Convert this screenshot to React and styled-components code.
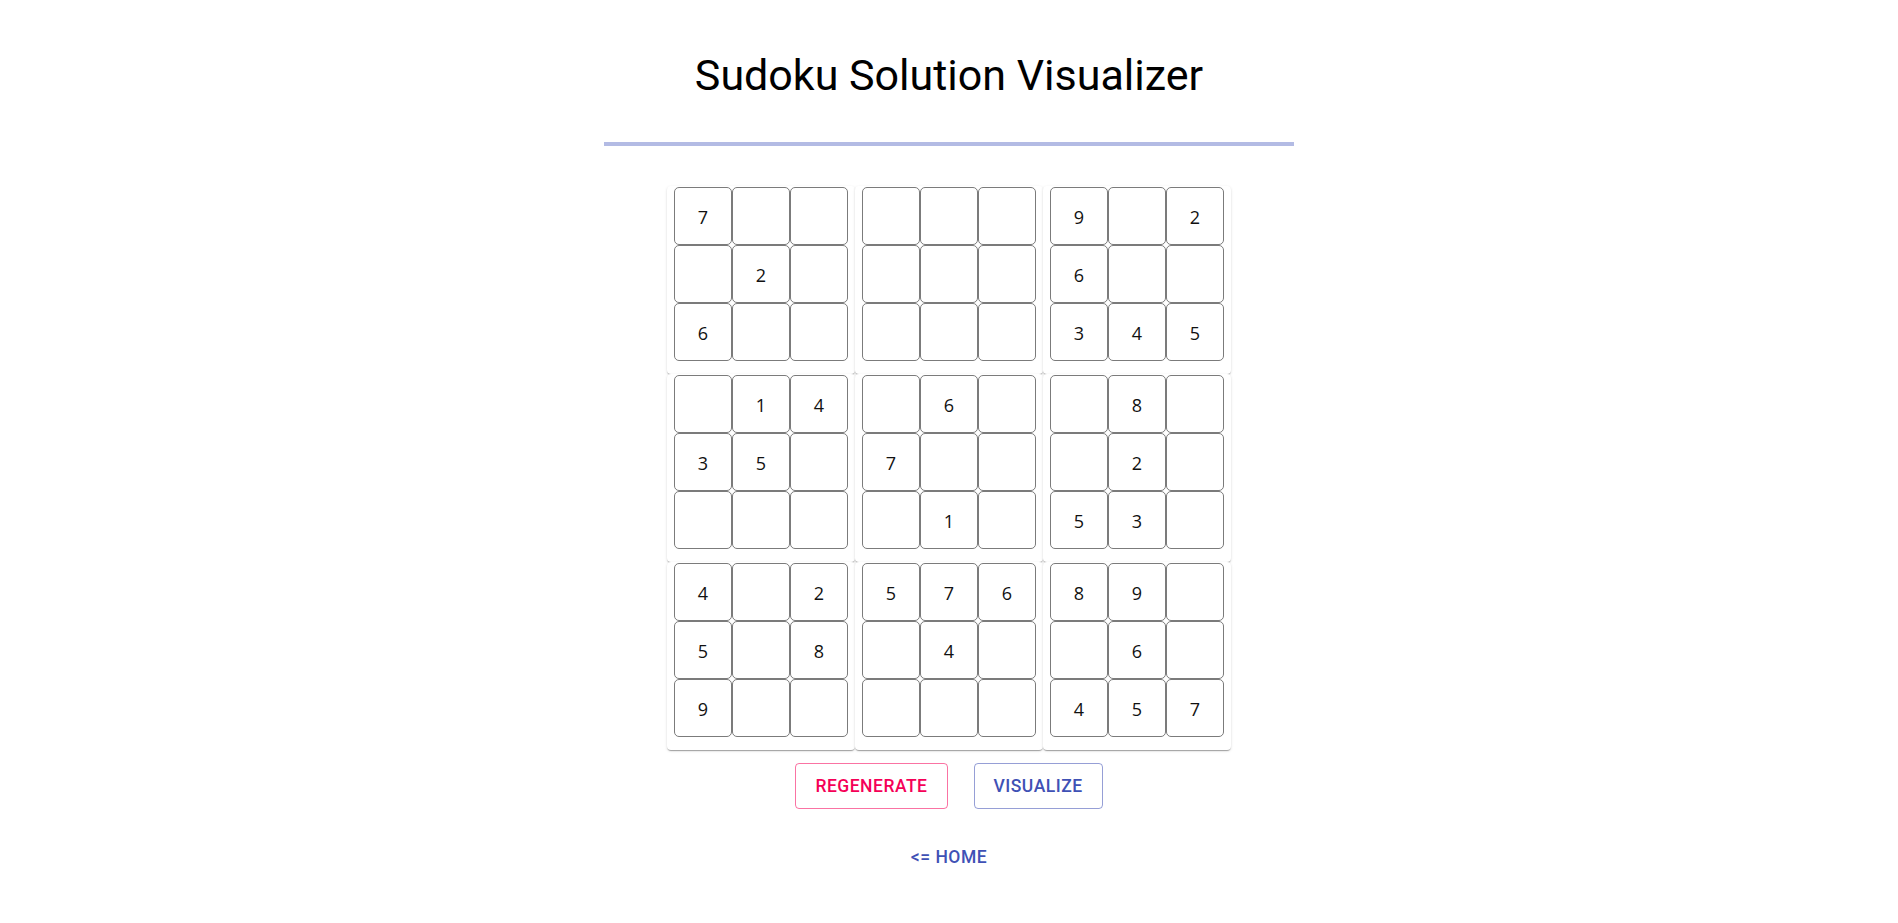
import React from 'react';
import styled, { createGlobalStyle } from 'styled-components';

const Global = createGlobalStyle`
  body {
    margin: 0;
    background: #fff;
    font-family: Roboto, "Liberation Sans", Arial, sans-serif;
  }
`;

const Page = styled.div`
  display: flex;
  flex-direction: column;
  align-items: center;
`;

const Title = styled.h1`
  margin: 50px 0 0;
  font-size: 43px;
  line-height: 50px;
  font-weight: 400;
  color: #000;
`;

const Divider = styled.hr`
  width: 690px;
  height: 4px;
  margin: 42px 0 0;
  border: 0;
  background: #b3bbe4;
`;

const Board = styled.div`
  margin-top: 40px;
  display: grid;
  grid-template-columns: repeat(3, 188px);
  grid-auto-rows: 188px;
`;

const Box = styled.div`
  box-sizing: border-box;
  padding: 1px 7px 13px;
  border-radius: 4px;
  background: #fff;
  box-shadow: 0px 2px 1px -1px rgba(0, 0, 0, 0.2), 0px 1px 1px 0px rgba(0, 0, 0, 0.14),
    0px 1px 3px 0px rgba(0, 0, 0, 0.12);
  display: grid;
  grid-template-columns: repeat(3, 58px);
  grid-auto-rows: 58px;
  justify-content: center;
`;

const Cell = styled.div`
  box-sizing: border-box;
  border: 1px solid #7b7b7b;
  border-radius: 5px;
  display: flex;
  align-items: center;
  justify-content: center;
  padding-top: 2px;
  font-family: "Open Sans", "Noto Sans", sans-serif;
  font-size: 18px;
  color: #111;
`;

const Actions = styled.div`
  margin-top: 13px;
  display: flex;
  gap: 26px;
`;

const Outlined = styled.button`
  height: 46px;
  padding: 0 19px;
  background: transparent;
  border-radius: 4px;
  border: 1px solid ${({ tone }) => (tone === 'pink' ? 'rgba(245, 0, 87, 0.55)' : 'rgba(63, 81, 181, 0.55)')};
  color: ${({ tone }) => (tone === 'pink' ? '#f50057' : '#3f51b5')};
  font-family: Roboto, sans-serif;
  font-weight: 500;
  font-size: 17.5px;
  letter-spacing: 0.02857em;
  text-transform: uppercase;
  cursor: pointer;
`;

const HomeLink = styled.button`
  margin-top: 27px;
  padding: 6px 8px;
  background: none;
  border: 0;
  color: #3f51b5;
  font-family: Roboto, sans-serif;
  font-weight: 500;
  font-size: 17.5px;
  line-height: 30px;
  letter-spacing: 0.02857em;
  cursor: pointer;
`;

// each string is one 3x3 box, read row by row; "." is empty
const boxes = [
  '7...2.6..',
  '.........',
  '9.26..345',
  '.1435....',
  '.6.7...1.',
  '.8..2.53.',
  '4.25.89..',
  '576.4....',
  '89..6.457',
];

export default function App() {
  return (
    <Page>
      <Global />
      <Title>Sudoku Solution Visualizer</Title>
      <Divider />
      <Board>
        {boxes.map((box, b) => (
          <Box key={b}>
            {box.split('').map((ch, i) => (
              <Cell key={i}>{ch === '.' ? '' : ch}</Cell>
            ))}
          </Box>
        ))}
      </Board>
      <Actions>
        <Outlined tone="pink">Regenerate</Outlined>
        <Outlined tone="blue">Visualize</Outlined>
      </Actions>
      <HomeLink>{'<= HOME'}</HomeLink>
    </Page>
  );
}
